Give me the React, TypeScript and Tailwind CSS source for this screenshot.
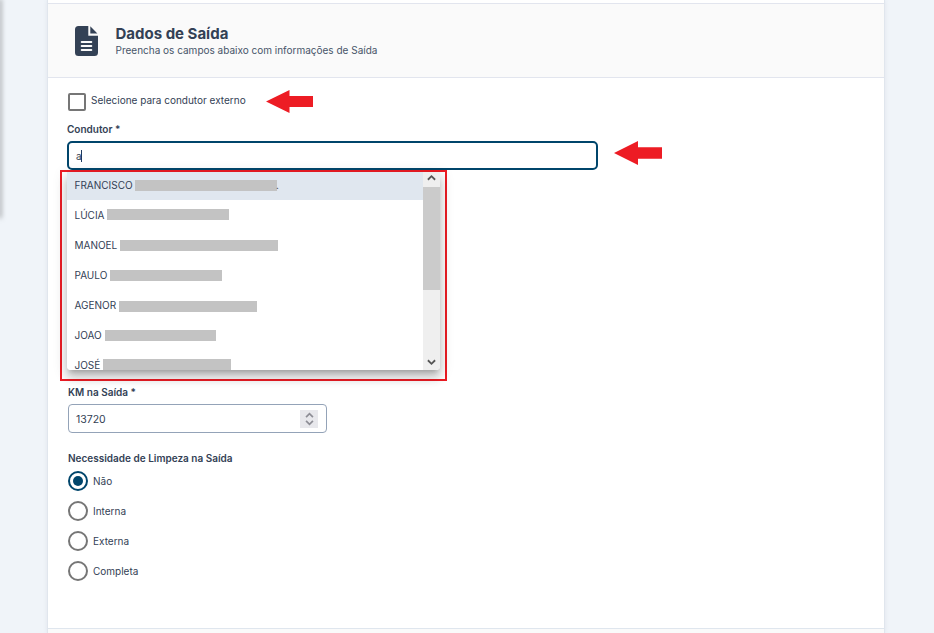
import React from 'react';

type Driver = { name: string; pad: string; bar: string; suffix?: string };

const drivers: Driver[] = [
  { name: 'FRANCISCO', pad: 'w-[60.5px]', bar: 'w-[142px] mt-[10px]', suffix: '.' },
  { name: 'LÚCIA', pad: 'w-[32.5px]', bar: 'w-[122px] mt-[9px]' },
  { name: 'MANOEL', pad: 'w-[45.5px]', bar: 'w-[158px] mt-[10px]' },
  { name: 'PAULO', pad: 'w-[35.5px]', bar: 'w-[112px] mt-[10px]' },
  { name: 'AGENOR', pad: 'w-[44.5px]', bar: 'w-[138px] mt-[11px]' },
  { name: 'JOAO', pad: 'w-[30.5px]', bar: 'w-[111px] mt-[10px]' },
  { name: 'JOSÉ', pad: 'w-[28.5px]', bar: 'w-[128px] mt-[9px]' },
];

const cleaning = ['Não', 'Interna', 'Externa', 'Completa'];

function RedArrow({ className }: { className: string }) {
  return (
    <svg className={className} viewBox="0 0 48 24" preserveAspectRatio="none">
      <path d="M0 12 24 0V6.3H48V17.7H24V24Z" fill="#ed1c24" />
    </svg>
  );
}

function DocumentIcon() {
  return (
    <svg className="h-[30px] w-[23px]" viewBox="0 0 23 30">
      <path d="M3.5 0H13.3V9.7H23V26.5A3.5 3.5 0 0 1 19.5 30H3.5A3.5 3.5 0 0 1 0 26.5V3.5A3.5 3.5 0 0 1 3.5 0Z" fill="#334155" />
      <path d="M15.3 0.3 22.4 7.4H15.3Z" fill="#334155" />
      <path d="M6.7 16H16.3M6.7 20H16.3M6.7 24H16.3" stroke="#fafafa" strokeWidth="2" strokeLinecap="round" />
    </svg>
  );
}

function Chevron({ down = false, className }: { down?: boolean; className: string }) {
  return (
    <svg className={className} viewBox="0 0 10 7" fill="none" stroke="currentColor" strokeWidth="2">
      <path d={down ? 'M1 1 5 5 9 1' : 'M1 6 5 2 9 6'} />
    </svg>
  );
}

function DriverMenu() {
  return (
    <div className="absolute left-[-7px] top-[29px] h-[211px] w-[387px] border-2 border-[#ed1c24] pl-[5px]">
      <div className="flex h-[198px] w-[373px] overflow-hidden rounded-b-[4px] bg-white shadow-[0_5px_5px_-3px_rgba(0,0,0,0.2),0_8px_10px_1px_rgba(0,0,0,0.14),0_3px_14px_2px_rgba(0,0,0,0.12)]">
        <ul className="-mt-[2px] w-[356px]">
          {drivers.map((d, i) => (
            <li key={d.name} className={`flex h-[30px] pl-[7.5px] ${i === 0 ? 'bg-[#e0e7ef]' : 'bg-white'}`}>
              <span className={`mt-[7px] h-[16px] shrink-0 whitespace-nowrap leading-[16px] ${d.pad}`}>{d.name}</span>
              <span className={`h-[11px] bg-[#c3c3c3] ${d.bar}`} />
              {d.suffix && <span className="-ml-[1px] mt-[7px] leading-[16px]">{d.suffix}</span>}
            </li>
          ))}
        </ul>
        <div className="flex w-[17px] flex-col items-center bg-[#efefef] text-[#555]">
          <div className="flex h-[15px] items-start pt-[2px]">
            <Chevron className="h-[7px] w-[9px]" />
          </div>
          <div className="h-[103px] w-full bg-[#cbcbcb]" />
          <Chevron down className="mb-[4px] mt-auto h-[7px] w-[9px]" />
        </div>
      </div>
    </div>
  );
}

export default function App() {
  return (
    <div className="flex h-[633px] w-[934px] overflow-hidden bg-[#f0f4f9] font-['Inter',sans-serif] text-[10px] text-[#334155]">
      <div className="h-[217px] w-0 shadow-[0_0_5px_1px_rgba(0,0,0,0.5)]" />
      <main className="ml-[47px] flex h-[633px] w-[838px] flex-col border-x border-[#e0e6ed] bg-white shadow-[0_0_4px_rgba(148,163,184,0.18)]">
        <header className="mt-[3px] flex h-[75px] shrink-0 items-start border-y border-[#e2e5ee] bg-[#fafafa] pl-[27px] pt-[22px]">
          <DocumentIcon />
          <div className="ml-[17.5px]">
            <h1 className="-mt-[1px] text-[15px] font-bold leading-[18px]">Dados de Saída</h1>
            <p className="text-[10px] leading-[14px] text-[#475569]">Preencha os campos abaixo com informações de Saída</p>
          </div>
        </header>
        <form className="flex flex-1 flex-col pl-5">
          <label className="mt-[12px] flex h-[23px] items-center">
            <span className="mt-px h-[18px] w-[18px] rounded-[2px] border-2 border-[#767676]" />
            <span className="ml-[5px] w-[175px] pb-[3px] leading-[20px]">Selecione para condutor externo</span>
            <RedArrow className="h-[23px] w-[47px]" />
          </label>
          <div className="-ml-px mt-[8px] h-[20px] font-semibold leading-[16px]">Condutor *</div>
          <div className="relative -ml-px flex">
            <div className="flex h-[29px] w-[531px] items-center rounded-[5px] border-2 border-[#00456b] pl-[7px]">
              <span className="pt-px">a</span>
              <span className="-ml-[0.7px] h-[12px] w-px bg-[#1e3a5f]" />
            </div>
            <RedArrow className="ml-[16px] h-[24px] w-[48px]" />
            <DriverMenu />
          </div>
          <div className="mt-[214px] h-[20px] font-semibold leading-[16px]">KM na Saída *</div>
          <div className="flex h-[29px] w-[259px] items-center justify-between rounded-[4px] border border-[#94a3b8] pl-[7px] pr-[8px]">
            <span className="pt-[2px] text-[10.5px]">13720</span>
            <span className="flex h-[18px] w-[18px] flex-col items-center justify-between bg-[#e8e8ec] py-[2px] text-[#8e8e96]">
              <Chevron className="h-[6px] w-[9px]" />
              <Chevron down className="h-[6px] w-[9px]" />
            </span>
          </div>
          <div className="mt-[16px] h-[17px] font-semibold leading-[18px]">Necessidade de Limpeza na Saída</div>
          {cleaning.map((c, i) => (
            <label key={c} className="flex h-[30px] items-center">
              <span className={`flex h-[20px] w-[20px] items-center justify-center rounded-full border-2 ${i === 0 ? 'border-[#00456b]' : 'border-[#767676]'}`}>
                {i === 0 && <span className="h-[10px] w-[10px] rounded-full bg-[#00456b]" />}
              </span>
              <span className="ml-[5px] pt-px">{c}</span>
            </label>
          ))}
        </form>
        <footer className="h-[5px] shrink-0 border-t border-[#dfe6ee] bg-[#fafafa]" />
      </main>
    </div>
  );
}
